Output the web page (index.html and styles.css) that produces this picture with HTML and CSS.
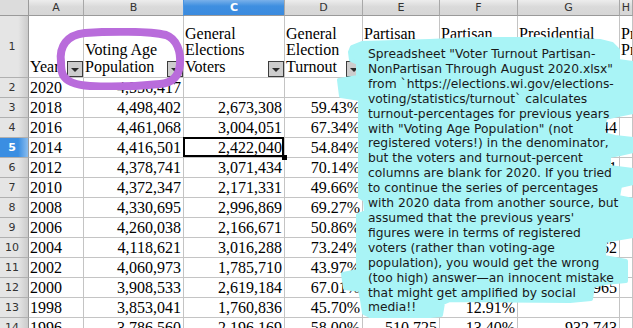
FILE: index.html
```html
<!DOCTYPE html>
<html lang="en">
<head>
  <meta charset="UTF-8" />
  <title>Voter Turnout</title>
  <link rel="stylesheet" href="styles.css">
</head>
<body>
  <div class="sheet">
    <div class="corner"></div>
    <div class="colhdr">A</div>
    <div class="colhdr">B</div>
    <div class="colhdr sel">C</div>
    <div class="colhdr">D</div>
    <div class="colhdr">E</div>
    <div class="colhdr">F</div>
    <div class="colhdr">G</div>
    <div class="colhdr">H</div>

    <div class="rowhdr">1</div>
    <div class="c head"><span>Year</span><i class="fb"></i></div>
    <div class="c head"><span>Voting Age<br>Population</span><i class="fb"></i></div>
    <div class="c head"><span>General<br>Elections<br>Voters</span><i class="fb"></i></div>
    <div class="c head"><span>General<br>Election<br>Turnout</span><i class="fb"></i></div>
    <div class="c head"><span>Partisan<br>Primary<br>Voters</span><i class="fb"></i></div>
    <div class="c head"><span>Partisan<br>Primary<br>Turnout</span><i class="fb"></i></div>
    <div class="c head"><span>Presidential<br>Primary<br>Voters</span><i class="fb"></i></div>
    <div class="c head"><span>Presidential<br>Primary<br>Turnout</span></div>
  </div>

  <div class="notes">
    <svg class="ink" width="633" height="328" viewBox="0 0 633 328">
      <defs>
        <filter id="soft" x="-5%" y="-5%" width="110%" height="110%">
          <feGaussianBlur stdDeviation="0.7" />
        </filter>
      </defs>
      <polygon class="marker" filter="url(#soft)" points="352,47 362,43 430,41 470,39 540,39 600,41 612,44 618,50 618,61 633,63 633,112 618,115 605,118 603,134 615,137 633,139 633,151 620,154 609,156 609,167 633,170 633,183 620,186 618,197 633,200 633,236 615,239 605,241 604,257 615,259 626,261 626,281 605,283 593,286 591,299 570,301 450,300 443,303 441,315 430,316 370,316 364,313 362,300 360,290 345,288 343,274 358,271 358,215 366,212 365,200 360,197 360,99 341,96 339,80 358,77 358,63 351,60 350,52" />
      <path class="ring" filter="url(#soft)" d="M61 62 C59 46 67 35 85 33 C110 31 150 31 166 35 C177 39 181 52 180 64 C179 77 172 83 160 84 C140 86 110 87 90 86 C75 85 66 81 63 75 C61 71 61 66 61 62 Z" />
    </svg>
    <div class="note-text">
      <div>Spreadsheet "Voter Turnout Partisan-</div>
      <div>NonPartisan Through August 2020.xlsx"</div>
      <div>from `https://elections.wi.gov/elections-</div>
      <div>voting/statistics/turnout` calculates</div>
      <div>turnout-percentages for previous years</div>
      <div>with "Voting Age Population" (not</div>
      <div>registered voters!) in the denominator,</div>
      <div>but the voters and turnout-percent</div>
      <div>columns are blank for 2020. If you tried</div>
      <div>to continue the series of percentages</div>
      <div>with 2020 data from another source, but</div>
      <div>assumed that the previous years'</div>
      <div>figures were in terms of registered</div>
      <div>voters (rather than voting-age</div>
      <div>population), you would get the wrong</div>
      <div>(too high) answer—an innocent mistake</div>
      <div>that might get amplified by social</div>
      <div>media!!</div>
    </div>
  </div>

  <script>
    // rows 2..14 of the sheet
    const rows = [
      ["2020", "4,556,417", "", "", "", "", "", ""],
      ["2018", "4,498,402", "2,673,308", "59.43%", "1,118,745", "24.87%", "", ""],
      ["2016", "4,461,068", "3,004,051", "67.34%", "987,312", "22.13%", "2,104,044", ""],
      ["2014", "4,416,501", "2,422,040", "54.84%", "621,108", "14.06%", "", ""],
      ["2012", "4,378,741", "3,071,434", "70.14%", "1,022,431", "23.35%", "1,103,911", ""],
      ["2010", "4,372,347", "2,171,331", "49.66%", "891,640", "20.39%", "", ""],
      ["2008", "4,330,695", "2,996,869", "69.27%", "540,122", "12.47%", "1,512,436", ""],
      ["2006", "4,260,038", "2,166,671", "50.86%", "575,360", "13.51%", "", ""],
      ["2004", "4,118,621", "3,016,288", "73.24%", "470,611", "11.43%", "825,962", ""],
      ["2002", "4,060,973", "1,785,710", "43.97%", "733,119", "18.05%", "", ""],
      ["2000", "3,908,533", "2,619,184", "67.01%", "449,025", "11.49%", "1,138,965", ""],
      ["1998", "3,853,041", "1,760,836", "45.70%", "497,475", "12.91%", "", ""],
      ["1996", "3,786,560", "2,196,169", "58.00%", "510,725", "13.40%", "932,743", ""]
    ];

    const sheet = document.querySelector(".sheet");
    rows.forEach((row, i) => {
      const num = i + 2;
      const hdr = document.createElement("div");
      hdr.className = "rowhdr" + (num === 5 ? " sel" : "");
      hdr.textContent = num;
      sheet.appendChild(hdr);
      row.forEach((val, col) => {
        const cell = document.createElement("div");
        cell.className = "c" + (col > 0 ? " n" : "");
        if (num === 5 && col === 2) cell.className += " cursor";
        cell.textContent = val;
        sheet.appendChild(cell);
      });
    });
  </script>
</body>
</html>
```

FILE: styles.css
```css
html, body {
  margin: 0;
  padding: 0;
  overflow: hidden;
  background: white;
}
body {
  position: relative;
  width: 633px;
  height: 328px;
}
.sheet {
  display: grid;
  grid-template-columns: 29px 55px 100px 101px 78px 77px 78px 102px 13px;
  grid-template-rows: 16px 62px repeat(13, 20px);
  height: 328px;
  overflow: hidden;
  font-family: "Liberation Serif", serif;
  font-size: 16px;
  color: #000;
}
.corner {
  background: #dcdcdc;
  border-right: 1px solid #9a9a9a;
  border-bottom: 1px solid #9a9a9a;
}
.colhdr {
  box-sizing: border-box;
  background: linear-gradient(#ededed, #dadada 45%, #d6d6d6);
  border-right: 1px solid #a8a8a8;
  border-bottom: 1px solid #9a9a9a;
  font-family: "DejaVu Sans", sans-serif;
  font-size: 11px;
  line-height: 15px;
  color: #333;
  text-align: center;
  overflow: hidden;
}
.colhdr.sel {
  background: linear-gradient(#79b0ea, #3f8fe0 40%, #3a8ade);
  color: white;
  font-weight: bold;
  box-shadow: -1px 0 0 #4a95e2;
}
.rowhdr {
  box-sizing: border-box;
  background: linear-gradient(to right, #e5e5e5 65%, #cbcbcb);
  border-right: 1px solid #9a9a9a;
  border-bottom: 1px solid #b0b0b0;
  font-family: "DejaVu Sans", sans-serif;
  font-size: 11px;
  color: #333;
  padding-right: 4px;
  display: flex;
  align-items: center;
  justify-content: center;
}
.rowhdr.sel {
  background: linear-gradient(to right, #3a8ee2 65%, #8bbdee);
  color: white;
  font-weight: bold;
}
.c {
  box-sizing: border-box;
  background: white;
  border-right: 1px solid #c4c4c4;
  border-bottom: 1px solid #c4c4c4;
  padding: 0 2px 0 1px;
  overflow: hidden;
  white-space: nowrap;
  display: flex;
  align-items: flex-end;
}
.c.n {
  justify-content: flex-end;
}
.c.head {
  line-height: 16.7px;
  padding-bottom: 1.4px;
  padding-right: 0;
  justify-content: space-between;
}
.c.head span {
  white-space: nowrap;
}
.fb {
  flex: none;
  box-sizing: border-box;
  width: 16px;
  height: 16px;
  margin-bottom: -1.4px;
  background: #cdcdcd;
  border: 1px solid #3c3c3c;
  display: flex;
  align-items: center;
  justify-content: center;
}
.fb::after {
  content: "";
  border-left: 4px solid transparent;
  border-right: 4px solid transparent;
  border-top: 4px solid #2b2b2b;
  margin-top: 1px;
}
.c.cursor {
  position: relative;
  z-index: 2;
  overflow: visible;
}
.c.cursor::after {
  content: "";
  position: absolute;
  top: -1px;
  left: -1px;
  right: 0;
  bottom: 0;
  border: 2px solid #000;
}
.c.cursor::before {
  content: "";
  position: absolute;
  right: -3px;
  bottom: -3px;
  width: 5px;
  height: 5px;
  background: #000;
}
.notes {
  position: absolute;
  left: 0;
  top: 0;
  width: 633px;
  height: 328px;
  z-index: 5;
  pointer-events: none;
}
.ink {
  position: absolute;
  left: 0;
  top: 0;
}
.marker {
  fill: #a9f4f6;
  stroke: #a9f4f6;
  stroke-width: 4;
  stroke-linejoin: round;
}
.ring {
  fill: none;
  stroke: #b96cdb;
  stroke-width: 8;
  stroke-linecap: round;
}
.note-text {
  position: absolute;
  left: 368px;
  top: 47px;
  font-family: "DejaVu Sans", sans-serif;
  font-size: 12.3px;
  line-height: 14.9px;
  color: #1a1a1a;
  white-space: nowrap;
}
```
